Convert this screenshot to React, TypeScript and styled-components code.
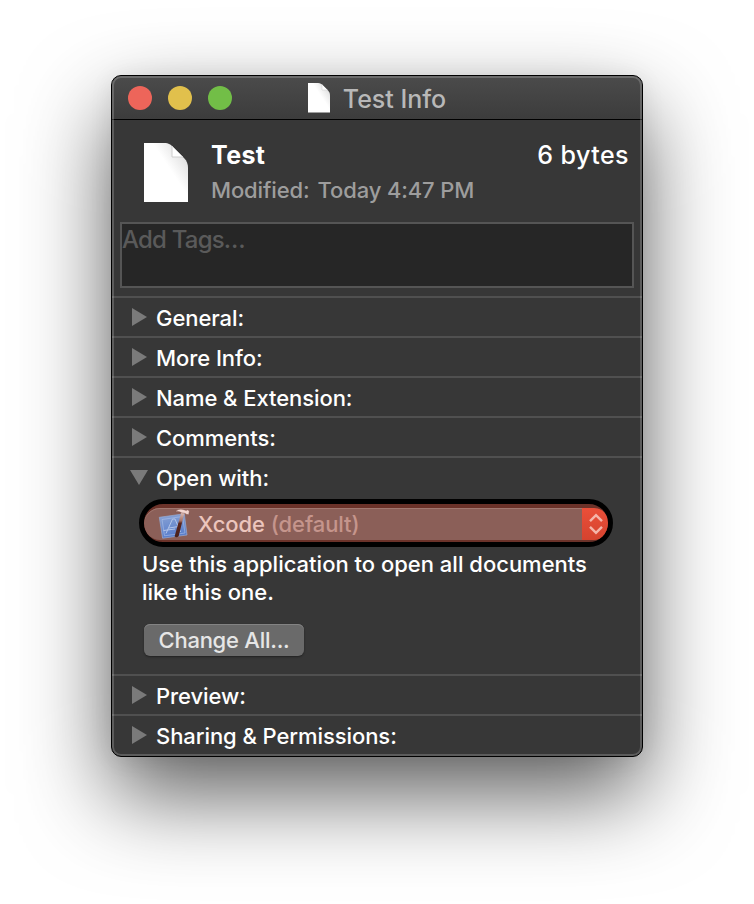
import React from "react";
import styled, { createGlobalStyle } from "styled-components";

const GlobalStyle = createGlobalStyle`
  * { box-sizing: border-box; }
  body { margin: 0; background: #fff; overflow: hidden; }
  svg { display: block; flex: none; }
`;

const Desktop = styled.main`
  display: flex;
  height: 904px;
  padding: 75px 111px 147px;
  overflow: hidden;
  font-family: Inter, "Liberation Sans", sans-serif;
  font-size: 22px;
  font-weight: 500;
  color: #fff;
`;

const Window = styled.section`
  position: relative;
  display: flex;
  flex-direction: column;
  width: 532px;
  height: 682px;
  border: 1px solid #000;
  border-radius: 10px;
  background: #373737;
  overflow: hidden;
  &::after {
    content: "";
    position: absolute;
    inset: 0;
    border-radius: 9px;
    border: 2px solid rgba(255, 255, 255, 0.19);
    pointer-events: none;
  }
`;

const Shadow = styled.div`
  display: flex;
  border-radius: 10px;
  box-shadow: 0 38px 88px rgba(0, 0, 0, 0.63), 0 2px 24px rgba(0, 0, 0, 0.07);
`;

const TitleBar = styled.header`
  position: relative;
  display: flex;
  align-items: center;
  justify-content: center;
  height: 44px;
  flex: none;
  padding-top: 1px;
  background: linear-gradient(#4b4b4b, #3c3c3c);
  border-bottom: 1px solid #000;
`;

const Lights = styled.div`
  position: absolute;
  left: 16px;
  top: 10px;
  display: flex;
  gap: 16px;
`;

const Light = styled.span<{ $color: string }>`
  width: 24px;
  height: 24px;
  border-radius: 50%;
  background: ${(p) => p.$color};
`;

const Title = styled.h1`
  margin: 0 0 0 13px;
  padding-top: 1px;
  font-size: 25px;
  line-height: 30px;
  font-weight: 450;
  color: #b8b8b8;
`;

const Summary = styled.div`
  display: flex;
  height: 102px;
  flex: none;
  padding: 20px 13px 0 32px;
  & > svg { margin-top: 3px; }
`;

const SummaryText = styled.div`
  flex: 1;
  margin-left: 23px;
`;

const SummaryLine = styled.div`
  display: flex;
  justify-content: space-between;
  line-height: 30px;
  font-size: 25px;
`;

const FileName = styled.span`
  font-weight: 700;
  letter-spacing: 0.4px;
`;

const FileSize = styled.span`
  font-weight: 500;
  letter-spacing: 0.45px;
`;

const Modified = styled.div`
  display: flex;
  gap: 8px;
  margin-top: 6px;
  line-height: 28px;
  font-weight: 450;
  letter-spacing: -0.13px;
  color: #9d9d9d;
`;

const Tags = styled.div`
  margin: 0 8px 8px;
  height: 66px;
  flex: none;
  border: 2px solid #555;
  background: #262626;
  color: #5a5a5a;
  font-size: 24px;
  font-weight: 450;
  line-height: 32px;
  letter-spacing: -0.8px;
`;

const Section = styled.section<{ $height?: number }>`
  height: ${(p) => p.$height ?? 40}px;
  flex: none;
  border-top: 2px solid #505050;
`;

const SectionHeader = styled.div`
  display: flex;
  align-items: center;
  height: 38px;
  padding: 2px 0 0 18px;
  line-height: 36px;
  letter-spacing: -0.07px;
`;

const ArrowSlot = styled.span`
  display: flex;
  justify-content: center;
  width: 18px;
  margin: 0 8px 2px 0;
`;

const PopUp = styled.div`
  display: flex;
  align-items: stretch;
  width: 474px;
  height: 48px;
  margin: 3px 0 0 27px;
  border: 5px solid #000;
  border-radius: 24px;
  background: #6b3229;
  padding: 4px 0 2px;
  overflow: hidden;
`;

const PopUpBody = styled.div`
  display: flex;
  align-items: center;
  flex: 1;
  padding-left: 14px;
  border-radius: 16px 0 0 16px;
  background: #8b5f58;
  box-shadow: inset 0 1px 0 #a0776f;
  line-height: 32px;
  letter-spacing: -0.1px;
`;

const AppName = styled.span`
  margin: 0 6px 0 8px;
  color: #ecc5bd;
`;

const DefaultMark = styled.span`
  color: #c5958c;
`;

const Stepper = styled.div`
  display: flex;
  align-items: center;
  justify-content: center;
  width: 26px;
  padding-left: 2px;
  border-radius: 0 14px 14px 0;
  background: linear-gradient(#ea4f39, #d5432f);
`;

const Hint = styled.p`
  margin: 3px 0 0 30px;
  line-height: 28px;
`;

const PushButton = styled.button`
  display: block;
  width: 160px;
  height: 32px;
  margin: 18px 0 0 32px;
  padding: 0;
  border: 0;
  border-radius: 6px;
  background: #6a6a6a;
  box-shadow: inset 0 1px 0 #838383, 0 1px 2px rgba(0, 0, 0, 0.4);
  color: #e6e6e6;
  font: 450 22px/32px Inter, "Liberation Sans", sans-serif;
  letter-spacing: -0.25px;
`;

const DocumentIcon = ({ width, id }: { width: number; id: string }) => (
  <svg width={width} height={(width * 59) / 44} viewBox="0 0 44 59">
    <defs>
      <linearGradient id={id} x1="1" y1="0" x2="0.55" y2="0.4">
        <stop offset="0" stopColor="#d2d2d2" />
        <stop offset="1" stopColor="#fff" />
      </linearGradient>
    </defs>
    <path d="M0 0H20C25 0 27 2 29 4L40 15C43 18 44 21 44 25V59H0Z" fill={`url(#${id})`} />
    <path d="M28 3V14H39Z" fill="#fff" />
    <path d="M28 3V14H39" fill="none" stroke="#cecece" strokeWidth="1" />
  </svg>
);

const Disclosure = ({ open }: { open?: boolean }) =>
  open ? (
    <svg width="18" height="15" viewBox="0 0 18 15">
      <path d="M0 0H18L9 15Z" fill="#7a7a7a" />
    </svg>
  ) : (
    <svg width="15" height="18" viewBox="0 0 15 18">
      <path d="M0 0L15 9L0 18Z" fill="#7a7a7a" />
    </svg>
  );

const XcodeIcon = () => (
  <svg width="32" height="32" viewBox="0 0 32 32">
    <defs>
      <linearGradient id="plate" x1="0" y1="0" x2="0.2" y2="1">
        <stop offset="0" stopColor="#8ba4d4" />
        <stop offset="1" stopColor="#587dcb" />
      </linearGradient>
      <linearGradient id="handle" x1="0" y1="0" x2="0" y2="1">
        <stop offset="0" stopColor="#e0c4be" />
        <stop offset="0.35" stopColor="#a5746a" />
        <stop offset="0.45" stopColor="#5b2720" />
        <stop offset="1" stopColor="#48201b" />
      </linearGradient>
    </defs>
    <path d="M1.3 9.3L26.3 5.8L29 27L4.6 30.2Z" fill="url(#plate)" stroke="#98a9cf" strokeWidth="0.7" />
    <g fill="none" stroke="#b3c5ea" strokeWidth="1" strokeLinejoin="round">
      <path d="M4 11.5L24.5 8.5L27 25L6.5 27.8Z" opacity="0.55" />
      <path d="M8 25.5L14.5 11L17 11L22.5 24M11 20L20.5 18.5M5.5 22.5L17 21" />
    </g>
    <path d="M23.4 4L26.6 4.5L20.6 28.3Q18.6 30 16.6 28.4Z" fill="url(#handle)" />
    <path d="M17 3.8Q20.5 0.2 25 1.4L28.3 2.6L29.2 1.8L31.4 2.7L30.7 6.8L28.2 6.2L27.2 5.4L24 4.9Q20.5 2.8 17 3.8Z" fill="#f3d6d0" stroke="#70413a" strokeWidth="0.4" />
  </svg>
);

const UpDownArrows = () => (
  <svg width="14" height="22" viewBox="0 0 14 22">
    <path d="M1 8.2L7 2.2L13 8.2M1 13.8L7 19.8L13 13.8" fill="none" stroke="#f4b5aa" strokeWidth="2.4" />
  </svg>
);

const Row = ({ label, open, height, children }: {
  label: string;
  open?: boolean;
  height?: number;
  children?: React.ReactNode;
}) => (
  <Section $height={height}>
    <SectionHeader>
      <ArrowSlot><Disclosure open={open} /></ArrowSlot>
      {label}
    </SectionHeader>
    {children}
  </Section>
);

export default function App() {
  return (
    <Desktop>
      <GlobalStyle />
      <Shadow>
        <Window>
          <TitleBar>
            <Lights>
              <Light $color="#ed655a" />
              <Light $color="#e1c04c" />
              <Light $color="#72be47" />
            </Lights>
            <DocumentIcon width={22} id="fileSmall" />
            <Title>Test Info</Title>
          </TitleBar>
          <Summary>
            <DocumentIcon width={44} id="fileLarge" />
            <SummaryText>
              <SummaryLine>
                <FileName>Test</FileName>
                <FileSize>6 bytes</FileSize>
              </SummaryLine>
              <Modified>
                <span>Modified:</span>
                <span>Today 4:47 PM</span>
              </Modified>
            </SummaryText>
          </Summary>
          <Tags>Add Tags…</Tags>
          <Row label="General:" />
          <Row label="More Info:" />
          <Row label="Name &amp; Extension:" />
          <Row label="Comments:" />
          <Row label="Open with:" open height={218}>
            <PopUp>
              <PopUpBody>
                <XcodeIcon />
                <AppName>Xcode</AppName>
                <DefaultMark>(default)</DefaultMark>
              </PopUpBody>
              <Stepper><UpDownArrows /></Stepper>
            </PopUp>
            <Hint>
              Use this application to open all documents
              <br />
              like this one.
            </Hint>
            <PushButton>Change All...</PushButton>
          </Row>
          <Row label="Preview:" />
          <Row label="Sharing &amp; Permissions:" />
        </Window>
      </Shadow>
    </Desktop>
  );
}
